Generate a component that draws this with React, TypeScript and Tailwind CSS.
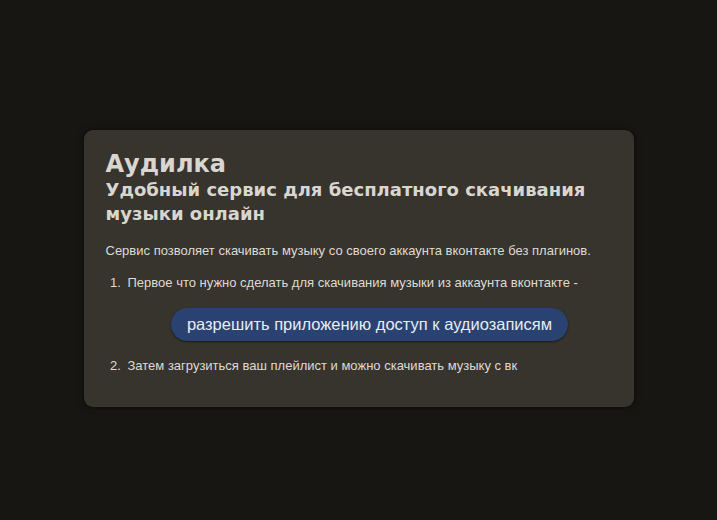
export default function App() {
  return (
    <div
      className="min-h-[520px] w-full bg-[#171612] pt-[130px] pb-[113px]"
      style={{ fontFamily: '"Liberation Sans", Arial, sans-serif' }}
    >
      <div className="mx-auto w-[550px] rounded-[9px] bg-[#37332d] px-[22px] pt-[20px] pb-[33px] text-[#dedbd5] shadow-[0_0_6px_rgba(0,0,0,0.6)]">
        <div style={{ fontFamily: '"DejaVu Sans", Verdana, sans-serif' }}>
          <h1 className="text-[24px] font-bold leading-[28px] text-[#d9d6d0]">Аудилка</h1>
          <h2 className="text-[18px] font-bold leading-[24px] text-[#d9d6d0]">
            Удобный сервис для бесплатного скачивания музыки онлайн
          </h2>
        </div>
        <p className="mt-[17px] text-[13px] leading-[16px]">
          Сервис позволяет скачивать музыку со своего аккаунта вконтакте без плагинов.
        </p>
        <ol className="mt-[16px] list-decimal pl-[19px] text-[13px] leading-[16px]">
          <li className="pl-[3px]">Первое что нужно сделать для скачивания музыки из аккаунта вконтакте -</li>
        </ol>
        <div className="mt-[17px] flex justify-center pl-[22px]">
          <button className="h-[33px] rounded-full bg-[#2a4271] px-[16px] text-[16.5px] text-[#e8ecf4] shadow-[0_1px_2px_rgba(0,0,0,0.5)]">
            разрешить приложению доступ к аудиозаписям
          </button>
        </div>
        <ol start={2} className="mt-[17px] list-decimal pl-[19px] text-[13px] leading-[16px]">
          <li className="pl-[3px]">Затем загрузиться ваш плейлист и можно скачивать музыку с вк</li>
        </ol>
      </div>
    </div>
  )
}
